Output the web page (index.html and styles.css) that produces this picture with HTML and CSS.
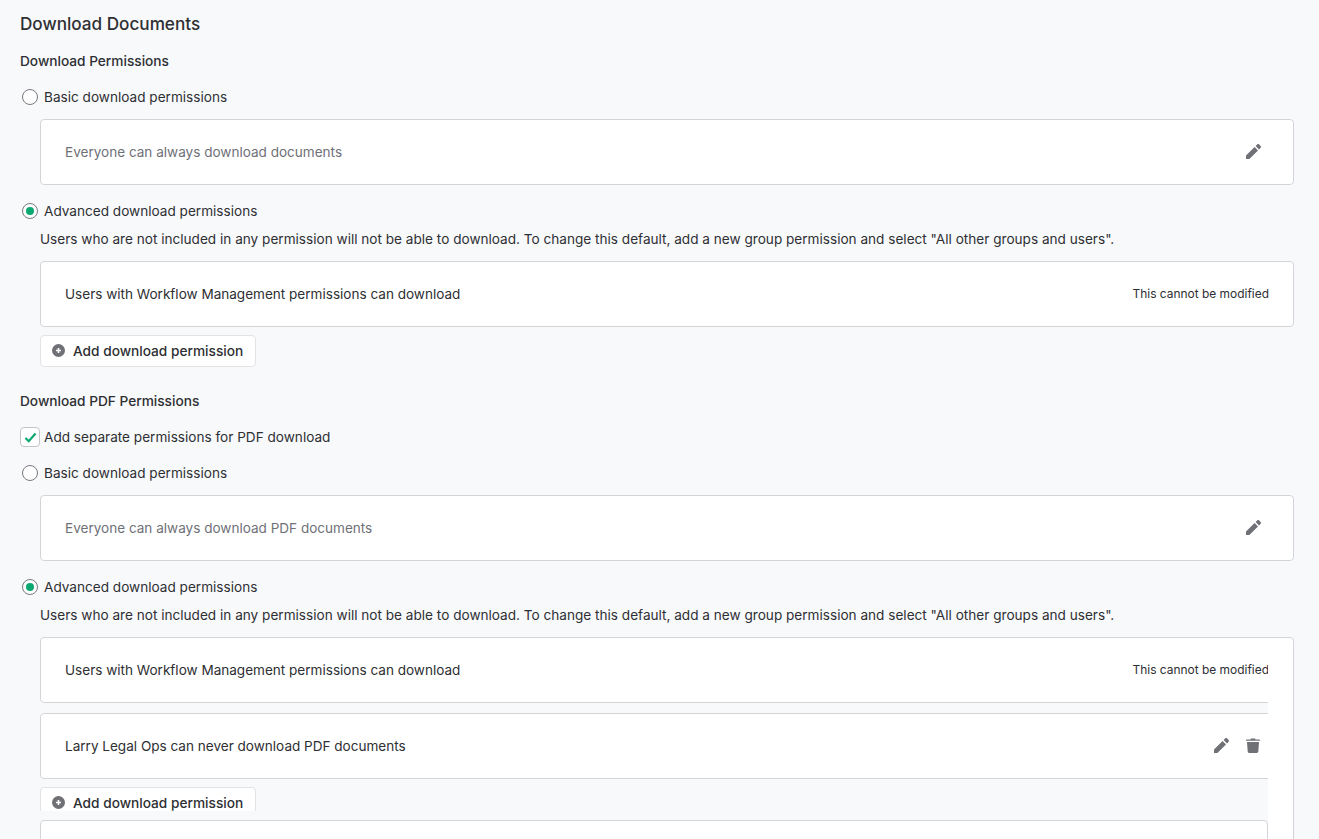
FILE: index.html
```html
<!DOCTYPE html>
<html lang="en">
<head>
    <meta charset="UTF-8">
    <meta name="viewport" content="width=device-width, initial-scale=1.0">
    <title>Download Documents</title>
    <link rel="stylesheet" href="styles.css">
</head>
<body>
    <svg class="icon-defs" aria-hidden="true">
        <symbol id="icon-edit" viewBox="0 0 16 16">
            <path d="M1 15v-3.4L9.6 3 13 6.4 4.4 15H1zM10.6 2l1.5-1.5c.6-.6 1.5-.6 2.1 0l1.3 1.3c.6.6.6 1.5 0 2.1L14 5.4 10.6 2z"/>
        </symbol>
        <symbol id="icon-trash" viewBox="0 0 14 15">
            <path d="M.7 1.5h3.8L5 .4h4l.5 1.1h3.8c.4 0 .7.3.7.7v.6H0v-.6c0-.4.3-.7.7-.7zM1 4h12l-.7 9.6c-.1.8-.7 1.4-1.5 1.4H3.2c-.8 0-1.4-.6-1.5-1.4L1 4z"/>
        </symbol>
        <symbol id="icon-add" viewBox="0 0 13 13">
            <path fill-rule="evenodd" d="M6.5 0a6.5 6.5 0 1 1 0 13 6.5 6.5 0 0 1 0-13zM5.7 4v1.7H4v1.6h1.7V9h1.6V7.3H9V5.7H7.3V4z"/>
        </symbol>
    </svg>

    <main class="page">
        <h1 class="page-title">Download Documents</h1>

        <!-- Download permissions -->
        <section class="perm-section">
            <h2 class="section-title">Download Permissions</h2>
            <div class="option">
                <span class="radio"></span>
                <span>Basic download permissions</span>
            </div>
            <div class="perm-card muted">
                <span>Everyone can always download documents</span>
                <div class="card-actions">
                    <button class="icon-btn" type="button" aria-label="Edit"><svg><use href="#icon-edit"/></svg></button>
                </div>
            </div>
            <div class="option option-advanced">
                <span class="radio checked"></span>
                <span>Advanced download permissions</span>
            </div>
            <p class="note">Users who are not included in any permission will not be able to download. To change this default, add a new group permission and select "All other groups and users".</p>
            <div class="perm-card">
                <span>Users with Workflow Management permissions can download</span>
                <span class="locked">This cannot be modified</span>
            </div>
            <button class="add-btn" type="button"><svg><use href="#icon-add"/></svg>Add download permission</button>
        </section>

        <!-- PDF permissions -->
        <section class="perm-section pdf-section">
            <h2 class="section-title">Download PDF Permissions</h2>
            <div class="option">
                <span class="checkbox">
                    <svg viewBox="0 0 14 12"><path d="M1.5 6.5l3.6 3.6 7.4-8.4"/></svg>
                </span>
                <span>Add separate permissions for PDF download</span>
            </div>
            <div class="option">
                <span class="radio"></span>
                <span>Basic download permissions</span>
            </div>
            <div class="perm-card muted">
                <span>Everyone can always download PDF documents</span>
                <div class="card-actions">
                    <button class="icon-btn" type="button" aria-label="Edit"><svg><use href="#icon-edit"/></svg></button>
                </div>
            </div>
            <div class="option option-advanced">
                <span class="radio checked"></span>
                <span>Advanced download permissions</span>
            </div>
            <p class="note">Users who are not included in any permission will not be able to download. To change this default, add a new group permission and select "All other groups and users".</p>

            <div class="perm-pane">
                <div class="pane-inner">
                    <div class="pane-scroll">
                        <div class="perm-card">
                            <span>Users with Workflow Management permissions can download</span>
                            <span class="locked">This cannot be modified</span>
                        </div>
                        <div class="perm-card pane-row">
                            <span>Larry Legal Ops can never download PDF documents</span>
                            <div class="card-actions">
                                <button class="icon-btn" type="button" aria-label="Edit"><svg><use href="#icon-edit"/></svg></button>
                                <button class="icon-btn" type="button" aria-label="Delete"><svg class="trash"><use href="#icon-trash"/></svg></button>
                            </div>
                        </div>
                        <button class="add-btn" type="button"><svg><use href="#icon-add"/></svg>Add download permission</button>
                    </div>
                    <div class="perm-card pane-next"></div>
                </div>
            </div>
        </section>
    </main>
</body>
</html>
```

FILE: styles.css
```css
:root {
    --bg-color: #f8f9fb;
    --text-color: #2e2f33;
    --muted-color: #6f7177;
    --border-color: #d4d5d8;
    --green-color: #0ba871;
}

html,
body {
    height: 839px;
    overflow: hidden;
}

body {
    margin: 0;
    font-family: Inter, "Noto Sans", sans-serif;
    font-size: 13.6px;
    line-height: 24px;
    color: var(--text-color);
    background-color: var(--bg-color);
}

.icon-defs {
    display: none;
}

.page {
    padding: 12px 25px 0 20px;
}

.page-title {
    margin: 0 0 13px;
    font-size: 17.15px;
    font-weight: 500;
}

.section-title {
    margin: 0 0 12px;
    font-size: 13.68px;
    font-weight: 500;
}

.pdf-section {
    margin-top: 22px;
}

.option {
    display: flex;
    align-items: center;
    gap: 4px;
    margin-bottom: 10px;
}

.pdf-section .option:nth-child(2) {
    margin-bottom: 12px;
}

.option-advanced {
    margin-top: 14px;
    margin-bottom: 4px;
}

.radio {
    box-sizing: border-box;
    flex: none;
    display: flex;
    align-items: center;
    justify-content: center;
    width: 16px;
    height: 16px;
    margin: 0 2px;
    border: 1px solid #77797e;
    border-radius: 50%;
    background: white;
}

.radio.checked::after {
    content: "";
    width: 8px;
    height: 8px;
    border-radius: 50%;
    background-color: var(--green-color);
}

.checkbox {
    box-sizing: border-box;
    flex: none;
    display: flex;
    align-items: center;
    justify-content: center;
    width: 20px;
    height: 20px;
    border: 1px solid #c4c5c9;
    border-radius: 4px;
    background: white;
}

.checkbox svg {
    width: 13px;
    height: 11px;
    fill: none;
    stroke: var(--green-color);
    stroke-width: 2.4;
}

.note {
    margin: 0 0 10px 20px;
}

.perm-card {
    box-sizing: border-box;
    display: flex;
    align-items: center;
    justify-content: space-between;
    height: 66px;
    margin-left: 20px;
    padding: 0 24px;
    font-size: 13.55px;
    background: white;
    border: 1px solid var(--border-color);
    border-radius: 4px;
}

.perm-card.muted {
    color: var(--muted-color);
}

.locked {
    font-size: 11.95px;
}

.card-actions {
    display: flex;
}

.icon-btn {
    display: flex;
    align-items: center;
    justify-content: center;
    width: 32px;
    height: 32px;
    padding: 0;
    border: none;
    background: none;
    cursor: pointer;
}

.icon-btn svg {
    width: 16px;
    height: 16px;
    fill: var(--muted-color);
}

.icon-btn svg.trash {
    width: 14px;
    height: 15px;
    margin-bottom: 2px;
}

.add-btn {
    display: flex;
    align-items: center;
    gap: 8px;
    height: 32px;
    margin: 8px 0 0 20px;
    padding: 0 12px 1px 11px;
    font-family: inherit;
    font-size: 13.7px;
    font-weight: 500;
    color: var(--text-color);
    background: white;
    border: 1px solid #e2e3e6;
    border-radius: 4px;
    cursor: pointer;
}

.add-btn svg {
    width: 13px;
    height: 13px;
    fill: var(--muted-color);
}

/* nested editor: inner list is narrower than its frame and cut off */
.perm-pane {
    box-sizing: border-box;
    height: 260px;
    margin: 0 0 0 20px;
    background: white;
    border: 1px solid var(--border-color);
    border-radius: 4px;
}

.pane-inner {
    width: 1228px;
    height: 261px;
    margin: -1px 0 0 -1px;
    background-color: var(--bg-color);
}

.pane-scroll {
    height: 174px;
    overflow: hidden;
}

.pane-scroll .perm-card {
    width: 1254px;
    margin-left: 0;
}

.pane-scroll .pane-row {
    margin-top: 10px;
}

.pane-scroll .add-btn {
    margin-left: 0;
}

.pane-next {
    margin: 9px 0 0;
}
```
